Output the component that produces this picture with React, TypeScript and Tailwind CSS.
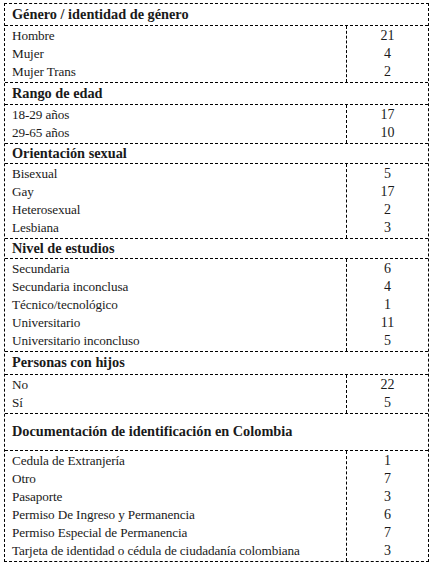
import React from "react";

type Section = { title: string; h: number; rows: [string, string][] };

const sections: Section[] = [
  { title: "Género / identidad de género", h: 22, rows: [["Hombre", "21"], ["Mujer", "4"], ["Mujer Trans", "2"]] },
  { title: "Rango de edad", h: 22, rows: [["18-29 años", "17"], ["29-65 años", "10"]] },
  { title: "Orientación sexual", h: 20, rows: [["Bisexual", "5"], ["Gay", "17"], ["Heterosexual", "2"], ["Lesbiana", "3"]] },
  {
    title: "Nivel de estudios",
    h: 20,
    rows: [
      ["Secundaria", "6"],
      ["Secundaria inconclusa", "4"],
      ["Técnico/tecnológico", "1"],
      ["Universitario", "11"],
      ["Universitario inconcluso", "5"],
    ],
  },
  { title: "Personas con hijos", h: 23, rows: [["No", "22"], ["Sí", "5"]] },
  {
    title: "Documentación de identificación en Colombia",
    h: 37,
    rows: [
      ["Cedula de Extranjería", "1"],
      ["Otro", "7"],
      ["Pasaporte", "3"],
      ["Permiso De Ingreso y Permanencia", "6"],
      ["Permiso Especial de Permanencia", "7"],
      ["Tarjeta de identidad o cédula de ciudadanía colombiana", "3"],
    ],
  },
];

export default function App() {
  return (
    <div className="w-[432px] h-[565px] bg-white pt-[3px] pl-[4px]" style={{ fontFamily: '"Liberation Serif", serif' }}>
      <div className="w-[425px] border border-dashed border-black text-[#1a1a1a]">
        {sections.map((s, i) => (
          <div key={s.title}>
            <div
              className="flex items-center border-b border-dashed border-black pl-[7px] font-bold text-[14.3px]"
              style={{ height: s.h }}
            >
              {s.title}
            </div>
            <div className={"flex " + (i < sections.length - 1 ? "border-b border-dashed border-black" : "")}>
              <div className="flex-1 py-[1px] pl-[7px] text-[13.2px] tracking-[-0.1px]">
                {s.rows.map((r) => (
                  <div key={r[0]} className="leading-[18px] h-[18px] whitespace-nowrap">
                    {r[0]}
                  </div>
                ))}
              </div>
              <div className="w-[82px] border-l border-dashed border-black py-[1px] text-center text-[14px]">
                {s.rows.map((r) => (
                  <div key={r[0]} className="leading-[18px] h-[18px]">
                    {r[1]}
                  </div>
                ))}
              </div>
            </div>
          </div>
        ))}
      </div>
    </div>
  );
}
